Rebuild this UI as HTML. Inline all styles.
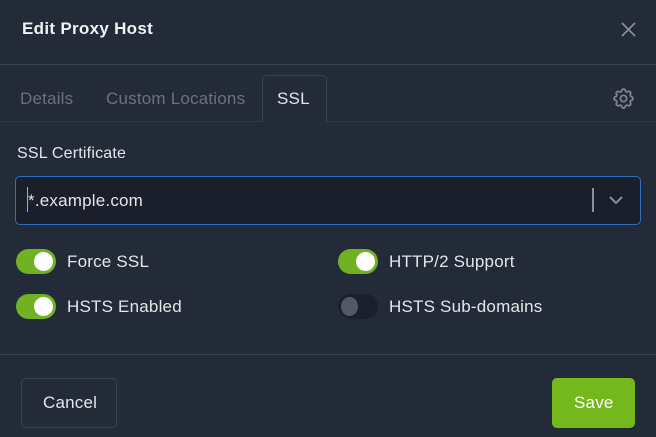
<!DOCTYPE html>
<html><head><style>
*{margin:0;padding:0;box-sizing:border-box}
body{width:656px;height:437px;background:#232b38;font-family:"Liberation Sans",sans-serif;color:#e3e6ea;position:relative;overflow:hidden}
.a{position:absolute}
.t{font-size:17px;letter-spacing:0.2px}
.tog{position:absolute;width:40px;height:25px;border-radius:13px;background:#70b224}
.tog::after{content:"";position:absolute;top:3px;left:18px;width:19px;height:19px;border-radius:50%;background:#fff}
.tog.off{background:#1b212c}
.tog.off::after{left:3px;background:#545966;width:17px}
</style></head><body>
<div class="a" style="left:22px;top:19px;font-size:17px;font-weight:bold;color:#f0f2f4;letter-spacing:0.3px">Edit Proxy Host</div>
<svg class="a" style="left:621px;top:22px" width="15" height="15" viewBox="0 0 15 15"><path d="M1 1L14 14M14 1L1 14" stroke="#8a919c" stroke-width="1.6"/></svg>
<div class="a" style="left:0;top:64px;width:656px;height:1px;background:#394250"></div>
<div class="a" style="left:0;top:121px;width:656px;height:1px;background:#2e3644"></div>
<div class="a" style="left:262px;top:75px;width:65px;height:47px;border:1px solid #394250;border-bottom:none;border-radius:5px 5px 0 0;background:#232b38"></div>
<div class="a t" style="left:20px;top:89px;color:#6b727d">Details</div>
<div class="a t" style="left:106px;top:89px;color:#6b727d">Custom Locations</div>
<div class="a t" style="left:277px;top:89px;color:#e3e6ea">SSL</div>
<svg class="a" style="left:611px;top:86px" width="25" height="25" viewBox="0 0 24 24" fill="none" stroke="#7d848f" stroke-width="1.7"><path d="M10.3 4.3c.4-1.8 3-1.8 3.4 0a1.7 1.7 0 0 0 2.6 1.1c1.5-.9 3.300.8 2.4 2.4a1.7 1.7 0 0 0 1 2.5c1.8.4 1.8 3 0 3.4a1.7 1.7 0 0 0-1 2.6c.9 1.500-.9 3.300-2.4 2.4a1.7 1.7 0 0 0-2.6 1c-.4 1.8-3 1.8-3.4 0a1.7 1.7 0 0 0-2.6-1c-1.5.9-3.3-.9-2.4-2.4a1.7 1.7 0 0 0-1-2.6c-1.8-.4-1.8-3 0-3.4a1.7 1.7 0 0 0 1-2.5c-.9-1.6.9-3.3 2.4-2.4a1.7 1.7 0 0 0 2.6-1.1z"/><circle cx="12" cy="12" r="3"/></svg>
<div class="a t" style="left:17px;top:145px;font-size:16px">SSL Certificate</div>
<div class="a" style="left:15px;top:176px;width:626px;height:49px;border:1.5px solid #2f6fc5;border-radius:5px;background:#1a1f2b"></div>
<div class="a" style="left:27px;top:187px;width:1px;height:25px;background:#aaa"></div>
<div class="a t" style="left:28px;top:191px;font-size:17px">*.example.com</div>
<div class="a" style="left:592px;top:188px;width:1.5px;height:24px;background:#8a919c"></div>
<svg class="a" style="left:608px;top:195px" width="16" height="10" viewBox="0 0 16 10"><path d="M2 2l6 6 6-6" stroke="#8a919c" stroke-width="2" fill="none"/></svg>
<div class="tog" style="left:16px;top:249px"></div>
<div class="a t" style="left:67px;top:252px">Force SSL</div>
<div class="tog" style="left:338px;top:249px"></div>
<div class="a t" style="left:389px;top:252px">HTTP/2 Support</div>
<div class="tog" style="left:16px;top:294px"></div>
<div class="a t" style="left:67px;top:297px">HSTS Enabled</div>
<div class="tog off" style="left:338px;top:294px"></div>
<div class="a t" style="left:389px;top:297px">HSTS Sub-domains</div>
<div class="a" style="left:0;top:354px;width:656px;height:1px;background:#394250"></div>
<div class="a" style="left:21px;top:378px;width:96px;height:50px;border:1px solid #394250;border-radius:5px"></div>
<div class="a t" style="left:43px;top:393px">Cancel</div>
<div class="a" style="left:552px;top:378px;width:83px;height:50px;background:#74b81d;border-radius:5px"></div>
<div class="a t" style="left:574px;top:393px;color:#fff">Save</div>
</body></html>
